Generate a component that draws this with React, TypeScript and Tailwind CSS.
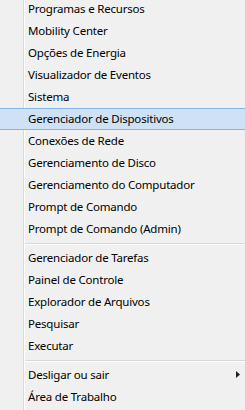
const groups: string[][] = [
  [
    "Programas e Recursos",
    "Mobility Center",
    "Opções de Energia",
    "Visualizador de Eventos",
    "Sistema",
    "Gerenciador de Dispositivos",
    "Conexões de Rede",
    "Gerenciamento de Disco",
    "Gerenciamento do Computador",
    "Prompt de Comando",
    "Prompt de Comando (Admin)",
  ],
  ["Gerenciador de Tarefas", "Painel de Controle", "Explorador de Arquivos", "Pesquisar", "Executar"],
  ["Desligar ou sair", "Área de Trabalho"],
];

const ACTIVE = "Gerenciador de Dispositivos";

function Gutter() {
  return (
    <>
      <div className="w-[23px] shrink-0" />
      <div className="w-px shrink-0 bg-[#d9d9d9]" />
      <div className="w-px shrink-0 bg-white" />
    </>
  );
}

function MenuItem({ label, submenu }: { label: string; submenu?: boolean }) {
  if (label === ACTIVE) {
    return (
      <div className="flex h-[22px] items-center border-y border-[#84b5e8] bg-[#cfe2f5] pl-[28px]">
        <span className="leading-none">{label}</span>
      </div>
    );
  }
  return (
    <div className="flex h-[22px]">
      <Gutter />
      <div className="flex flex-1 items-center justify-between pl-[3px] pr-[5px]">
        <span className="leading-none">{label}</span>
        {submenu && (
          <svg width="4" height="7" viewBox="0 0 4 7" className="mt-[-2px]">
            <path d="M0 0 L4 3.5 L0 7 Z" fill="#222" />
          </svg>
        )}
      </div>
    </div>
  );
}

function Separator() {
  return (
    <div className="flex h-[7px]">
      <Gutter />
      <div className="flex flex-1 flex-col justify-center">
        <div className="h-px bg-[#d7d7d7]" />
        <div className="h-px bg-white" />
      </div>
    </div>
  );
}

export default function App() {
  return (
    <div className="h-[410px] w-[245px] overflow-hidden bg-[#f0f0f0] font-['Segoe_UI','Noto_Sans',sans-serif] text-[11.5px] tracking-[-0.2px] text-black">
      <div className="-mt-[2px] flex flex-col">
        {groups.map((g, gi) => (
          <div key={gi} className="flex flex-col">
            {gi > 0 && <Separator />}
            {g.map((label) => (
              <MenuItem key={label} label={label} submenu={label === "Desligar ou sair"} />
            ))}
          </div>
        ))}
        <div className="flex h-[4px]">
          <Gutter />
        </div>
      </div>
    </div>
  );
}
